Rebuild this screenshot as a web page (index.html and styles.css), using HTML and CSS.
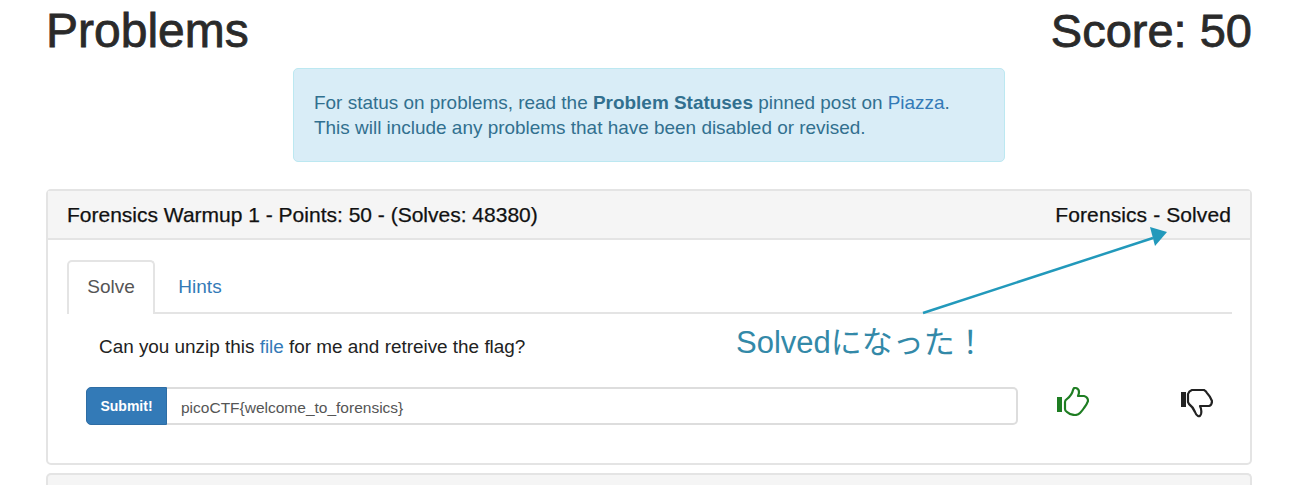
FILE: index.html
```html
<!DOCTYPE html>
<html lang="en">
<head>
    <meta charset="UTF-8">
    <meta name="viewport" content="width=device-width, initial-scale=1.0">
    <title>Problems</title>
    <link rel="stylesheet" href="styles.css">
</head>
<body>
    <div class="container">
        <div class="page-head">
            <h1>Problems</h1>
            <h1 class="score">Score: 50</h1>
        </div>

        <div class="alert">
            For status on problems, read the <b>Problem Statuses</b> pinned post on <a href="#">Piazza</a>.<br>
            This will include any problems that have been disabled or revised.
        </div>

        <div class="panel">
            <div class="panel-heading">
                <span>Forensics Warmup 1 - Points: 50 - (Solves: 48380)</span>
                <span class="status">Forensics - Solved</span>
            </div>
            <div class="panel-body">
                <ul class="tabs">
                    <li class="tab active">Solve</li>
                    <li class="tab"><a href="#">Hints</a></li>
                </ul>
                <p class="question">Can you unzip this <a href="#">file</a> for me and retreive the flag?</p>
                <div class="answer-row">
                    <div class="input-group">
                        <button class="submit">Submit!</button>
                        <div class="flag-input">picoCTF{welcome_to_forensics}</div>
                    </div>
                    <div class="votes">
                        <svg class="thumb" width="32" height="29" viewBox="0 0 32 29">
                            <rect x="0" y="10" width="5" height="15" fill="#1e7d22"/>
                            <path d="M8 15 Q8 13 10 12 Q15 8 16 3 Q17 0 19 1 Q22 2 22 5 Q22 7 21 9 L27 9 Q31 10 31 14 Q30 17 27 21 Q25 24 23 26 Q21 28 18 28 Q13 28 10 25 Q8 24 8 22 Z" fill="none" stroke="#1e7d22" stroke-width="2.2" stroke-linejoin="round"/>
                        </svg>
                        <svg class="thumb thumb-down" width="32" height="29" viewBox="0 0 32 29">
                            <rect x="0" y="3" width="5" height="15" fill="#222"/>
                            <path d="M7 5 Q8 2 11 1 Q17 1 23 1 Q25 2 26 4 Q29 7 31 12 Q31 16 28 17 L19 17 Q21 21 20 25 Q19 28 17 27 Q15 26 14 23 Q12 18 8 15 L7 13 Z" fill="none" stroke="#222" stroke-width="2.2" stroke-linejoin="round"/>
                        </svg>
                    </div>
                </div>
            </div>
        </div>

        <div class="panel panel-next"></div>

        <!-- annotation drawn over the screenshot -->
        <svg class="arrow" width="260" height="100" viewBox="0 0 260 100">
            <path d="M1 88 L231 13" stroke="#2299bb" stroke-width="2.5" fill="none"/>
            <path d="M245 7 L228 2 L233 21 Z" fill="#2299bb"/>
        </svg>
        <div class="note">Solvedになった！</div>
    </div>
</body>
</html>
```

FILE: styles.css
```css
body {
    font-family: "Liberation Sans", Arial, sans-serif;
    margin: 0;
    color: #333;
    background: #fff;
}
a {
    color: #337ab7;
    text-decoration: none;
}
.container {
    position: relative;
    width: 1206px;
    margin-left: 46px;
}
.page-head {
    display: flex;
    justify-content: space-between;
    height: 68px;
}
h1 {
    margin: 0;
    font-size: 48px;
    font-weight: 400;
    line-height: 61px;
    color: #2a2a2a;
    -webkit-text-stroke: 0.8px #2a2a2a;
}
.score {
    font-size: 47px;
}
.alert {
    box-sizing: border-box;
    width: 712px;
    height: 94px;
    margin: 0 0 27px 247px;
    padding: 21px 20px;
    background: #d9edf7;
    border: 1px solid #bce8f1;
    border-radius: 5px;
    color: #31708f;
    font-size: 18.95px;
    line-height: 25px;
}
.panel {
    box-sizing: border-box;
    height: 276px;
    border: 2px solid #e4e4e4;
    border-radius: 5px;
}
.panel-heading {
    display: flex;
    justify-content: space-between;
    align-items: center;
    box-sizing: border-box;
    height: 49px;
    padding: 0 19px;
    background: #f5f5f5;
    border-bottom: 2px solid #e4e4e4;
    color: #111;
    font-size: 21px;
    -webkit-text-stroke: 0.25px #111;
}
.status {
    letter-spacing: 0.1px;
}
.panel-body {
    padding: 20px 18px 0 19px;
}
.tabs {
    display: flex;
    margin: 0;
    padding: 0;
    height: 54px;
    box-sizing: border-box;
    list-style: none;
    border-bottom: 2px solid #e4e4e4;
    font-size: 19px;
}
.tab {
    box-sizing: border-box;
    width: 88px;
    height: 54px;
    padding: 16px 0 0 2px;
    text-align: center;
}
.tab.active {
    background: #fff;
    border: 2px solid #e4e4e4;
    border-bottom: 0;
    border-radius: 5px 5px 0 0;
    padding: 14px 0 0;
    color: #555;
}
.question {
    margin: 21px 0 28px 32px;
    font-size: 18.9px;
    line-height: 24px;
    color: #222;
}
.answer-row {
    display: flex;
    align-items: flex-start;
    margin-left: 19px;
}
.input-group {
    display: flex;
    width: 932px;
    height: 38px;
}
.submit {
    width: 81px;
    background: #337ab7;
    border: 1px solid #2e6da4;
    border-radius: 5px 0 0 5px;
    color: #fff;
    font-family: inherit;
    font-size: 14px;
    font-weight: 700;
    padding: 0;
}
.flag-input {
    flex: 1;
    padding-left: 14px;
    border: 2px solid #ddd;
    border-left: 0;
    border-radius: 0 5px 5px 0;
    color: #555;
    font-size: 15.5px;
    line-height: 37px;
}
.votes {
    display: flex;
    justify-content: space-between;
    width: 156px;
    margin-left: 39px;
}
.thumb-down {
    margin-top: 2px;
}
.panel-next {
    height: 12px;
    margin-top: 8px;
    background: #f5f5f5;
    border-bottom: 0;
    border-radius: 5px 5px 0 0;
}
.arrow {
    position: absolute;
    left: 876px;
    top: 225px;
}
.note {
    position: absolute;
    left: 690px;
    top: 323px;
    color: #3389a8;
    font-family: "Liberation Sans", "Noto Sans CJK JP", sans-serif;
    font-size: 31px;
    line-height: 40px;
}
```
